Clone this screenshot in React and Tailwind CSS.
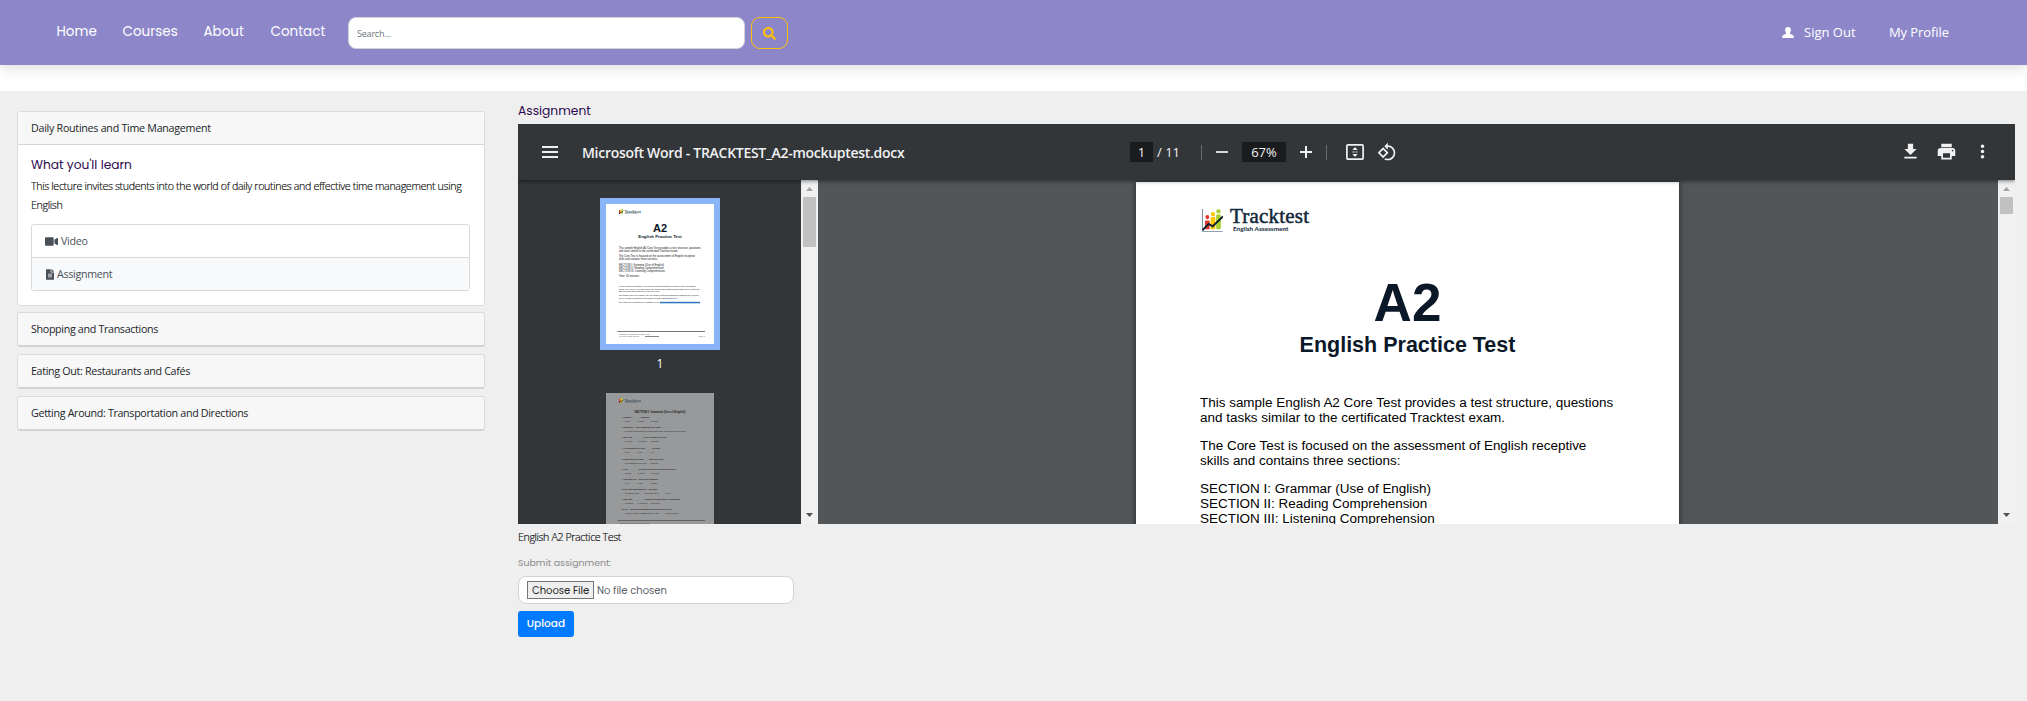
import React from "react";
import { FaSearch, FaVideo, FaFileAlt } from "react-icons/fa";

const poppins = "font-['Poppins','Inter',sans-serif]";
const segoe = "font-['Open_Sans','Noto_Sans',sans-serif]";

function Logo({ className }) {
  return (
    <svg className={className} viewBox="306 297 63 68" preserveAspectRatio="none">
      <path d="M307.5 297V364H368" fill="none" stroke="#6d7f8c" strokeWidth="2.6" />
      <circle cx="322" cy="321" r="6" fill="#e5352c" />
      <rect x="315" y="331" width="14" height="26" rx="3" fill="#e5352c" />
      <circle cx="339" cy="312" r="6.5" fill="#fdc800" />
      <rect x="332" y="321" width="14" height="36" rx="3" fill="#fdc800" />
      <circle cx="355.5" cy="304" r="6.5" fill="#a5d02f" />
      <rect x="348.5" y="313" width="14" height="44" rx="3" fill="#a5d02f" />
      <path d="M308 359L326 341L338 348L369 319" fill="none" stroke="#0b1d2d" strokeWidth="5.5" />
    </svg>
  );
}

function Header() {
  return (
    <header className="relative z-10 flex h-[65px] items-start bg-[#8d87ca] text-white shadow-[0_4px_12px_rgba(0,0,0,0.12)]">
      <nav className={`${poppins} flex gap-[27px] pl-[56.5px] pt-[22px] text-[13.5px] leading-5`}>
        <a className="w-[39px] whitespace-nowrap">Home</a>
        <a className="w-[54px] whitespace-nowrap">Courses</a>
        <a className="w-[40px] whitespace-nowrap">About</a>
        <a className="w-[54px] whitespace-nowrap">Contact</a>
      </nav>
      <div className={`${segoe} ml-[23.5px] mt-[17px] h-8 w-[397px] rounded-lg border border-[#ced4da] bg-white pl-2 pt-[8px] text-[9px] leading-4 tracking-[-0.2px] text-[#6c757d]`}>
        Search...
      </div>
      <button className="ml-[6px] mt-[17px] flex h-8 w-[37px] items-center justify-center rounded-[9px] border border-[#ffc107] text-[#ffc107]">
        <FaSearch className="size-[13px]" />
      </button>
      <div className={`${segoe} ml-auto flex pr-[78px] pt-[22px] text-[13px] leading-5`}>
        <svg className="mr-[10px] mt-[5px] h-[11px] w-3" viewBox="0 0 12 11" fill="currentColor">
          <path d="M6 0C7.9 0 8.9 1.3 8.9 3C8.9 4.8 7.8 6.3 7.5 6.6C8.5 7.2 11 7.7 11.6 9C11.9 9.6 12 10.4 12 11H0C0 10.4.1 9.6.4 9C1 7.7 3.5 7.2 4.5 6.6C4.2 6.3 3.1 4.8 3.1 3C3.1 1.3 4.1 0 6 0Z" />
        </svg>
        <a className="w-[52px] whitespace-nowrap">Sign Out</a>
        <a className="ml-[33px] w-[60px] whitespace-nowrap tracking-[-0.08px]">My Profile</a>
      </div>
    </header>
  );
}

function Lecture({ title }) {
  return (
    <div className="mt-[7px] h-[35px] rounded-[3px] border border-b-2 border-[#dcdcdc] border-b-[#d2d2d2] bg-[#f7f7f7] pl-[13px] pt-[6px] tracking-[-0.32px]">
      {title}
    </div>
  );
}

function Sidebar() {
  return (
    <aside className={`${segoe} ml-[17px] w-[468px] pt-5 text-[10.7px] leading-5 text-[#212529]`}>
      <div className="-mb-px h-[195px] rounded-[3px] border border-[#dcdcdc] bg-white">
        <div className="h-[33px] border-b border-[#d5d5d5] bg-[#f7f7f7] pl-[13px] pt-[6px] tracking-[-0.27px]">
          Daily Routines and Time Management
        </div>
        <div className="px-[13px] pt-[10px]">
          <h2 className={`${poppins} text-[12.25px] leading-5 text-[#2b0a4e]`}>What you'll learn</h2>
          <p className="mt-[2px] font-light leading-[19px] tracking-[-0.355px] text-black whitespace-nowrap [-webkit-text-stroke:0.15px_#000]">
            This lecture invites students into the world of daily routines and effective time management using
            <br />
            English
          </p>
          <div className="mt-[9px] h-[67px] w-[439px] rounded-[3px] border border-[#d9d9d9] tracking-[-0.3px] text-[#495057]">
            <div className="flex h-[33px] items-center border-b border-[#d9d9d9] pl-[13px]">
              <FaVideo className="mr-[3px] h-[13px] w-[13px]" />Video
            </div>
            <div className="flex h-8 items-center bg-[#f8f9fa] pl-[14px]">
              <FaFileAlt className="mr-[3px] h-[11px] w-2" />Assignment
            </div>
          </div>
        </div>
      </div>
      <Lecture title="Shopping and Transactions" />
      <Lecture title="Eating Out: Restaurants and Cafés" />
      <Lecture title="Getting Around: Transportation and Directions" />
    </aside>
  );
}

function Toolbar() {
  return (
    <div className={`${segoe} relative z-10 flex h-14 items-start bg-[#323639] text-[#f1f1f1] shadow-[0_1px_4px_rgba(0,0,0,0.5)]`}>
      <svg className="ml-6 mt-[22px] h-3 w-4" viewBox="0 0 16 12" fill="currentColor"><path d="M0 0H16V2H0ZM0 5H16V7H0ZM0 10H16V12H0Z" /></svg>
      <div className="ml-6 w-[322px] whitespace-nowrap pt-[19px] text-[14px] font-semibold leading-5 tracking-[-0.29px]">Microsoft Word - TRACKTEST_A2-mockuptest.docx</div>
      <div className="ml-[226px] mt-[18px] h-5 w-[23px] bg-[#191b1c] text-center text-[13px] leading-5">1</div>
      <div className="ml-1 mt-[18px] w-[24px] whitespace-nowrap text-[13px] leading-5">/ 11</div>
      <div className="ml-5 mt-[21px] h-[15px] w-px bg-[#6b6e70]" />
      <div className="ml-[14px] mt-[27px] h-[2px] w-3 bg-[#d5d7d8]" />
      <div className="ml-[14px] mt-[18px] h-5 w-11 bg-[#191b1c] text-center text-[13px] leading-5">67%</div>
      <svg className="ml-[14px] mt-[22px] size-3" viewBox="0 0 12 12" fill="currentColor"><path d="M5 0H7V5H12V7H7V12H5V7H0V5H5Z" /></svg>
      <div className="ml-[14px] mt-[21px] h-[15px] w-px bg-[#6b6e70]" />
      <svg className="ml-[19px] mt-5 h-4 w-[18px]" viewBox="0 0 18 16" fill="none">
        <rect x=".9" y=".9" width="16.2" height="14.2" rx="1" stroke="#f1f1f1" strokeWidth="1.7" />
        <path d="M9 3L11.6 6H6.4ZM9 13L6.4 10H11.6ZM6.4 7.6H7.7V8.5H6.4ZM8.4 7.6H9.6V8.5H8.4ZM10.3 7.6H11.6V8.5H10.3Z" fill="#f1f1f1" />
      </svg>
      <svg className="ml-[13px] mt-[18px] size-5" viewBox="0 0 24 24" fill="currentColor">
        <path d="M7.34 6.41L.86 12.9l6.49 6.48 6.49-6.48-6.5-6.49zM3.69 12.9l3.66-3.66L11 12.9l-3.66 3.66-3.65-3.66zm15.67-6.26A8.95 8.95 0 0 0 13 4V.76L8.76 5 13 9.24V6c1.79 0 3.58.68 4.95 2.05a7.007 7.007 0 0 1 0 9.9 6.973 6.973 0 0 1-7.79 1.44l-1.49 1.49C10.02 21.62 11.51 22 13 22c2.3 0 4.61-.88 6.36-2.64a8.98 8.98 0 0 0 0-12.72z" />
      </svg>
      <div className="ml-auto flex pr-[22px] pt-[17px]">
        <svg className="size-[21px]" viewBox="0 0 24 24" fill="currentColor"><path d="M19 9h-4V3H9v6H5l7 7 7-7zM5 18v2h14v-2H5z" /></svg>
        <svg className="ml-[15px] size-[21px]" viewBox="0 0 24 24" fill="currentColor"><path d="M19 8H5c-1.66 0-3 1.34-3 3v6h4v4h12v-4h4v-6c0-1.66-1.34-3-3-3zm-3 11H8v-5h8v5zm3-7c-.55 0-1-.45-1-1s.45-1 1-1 1 .45 1 1-.45 1-1 1zm-1-9H6v4h12V3z" /></svg>
        <svg className="ml-[15px] size-[21px]" viewBox="0 0 24 24" fill="currentColor"><path d="M12 8c1.1 0 2-.9 2-2s-.9-2-2-2-2 .9-2 2 .9 2 2 2zm0 2c-1.1 0-2 .9-2 2s.9 2 2 2 2-.9 2-2-.9-2-2-2zm0 6c-1.1 0-2 .9-2 2s.9 2 2 2 2-.9 2-2-.9-2-2-2z" /></svg>
      </div>
    </div>
  );
}

function Scrollbar({ thumb }) {
  return (
    <div className="flex w-[17px] shrink-0 flex-col items-center bg-[#f1f1f1] pt-[7px] pb-[7px]">
      <svg className="h-1 w-[7px]" viewBox="0 0 7 4"><path d="M0 4L3.5 0L7 4Z" fill="#a3a3a3" /></svg>
      <div className={`mt-[6px] w-[13px] bg-[#c1c1c1] ${thumb}`} />
      <svg className="mt-auto h-1 w-[7px]" viewBox="0 0 7 4"><path d="M0 0L3.5 4L7 0Z" fill="#505050" /></svg>
    </div>
  );
}

/* [text, x, y of the middle, width] in thumbnail pixels */
const firstPageLines = [
  ["This sample English A2 Core Test provides a test structure, questions", 12.7, 44, 82],
  ["and tasks similar to the certificated Tracktest exam.", 12.7, 47.2, 59.6],
  ["The Core Test is focused on the assessment of English receptive", 12.7, 52.2, 76.3],
  ["skills and contains three sections:", 12.7, 55.2, 39],
  ["SECTION I: Grammar (Use of English)", 12.7, 61, 45.3],
  ["SECTION II: Reading Comprehension", 12.7, 64, 45],
  ["SECTION III: Listening Comprehension", 12.7, 67, 46.3],
  ["Time: 45 minutes", 12.7, 72.3, 20.3],
  ["In the official test session, you can do speaking/writing exercises, with a Certificate", 12.7, 82.5, 77.6],
  ["before you receive your test result. The optional Speaking/Writing tests can be completed", 12.7, 84.9, 80.8],
  ["after the successful completion of the Core test.", 12.7, 87.5, 41],
  ["The sample test is for practice only. No official results and TrackTest certificates are provided", 12.7, 91.4, 80],
  ["only for complete tests taken through the website https://tracktest.eu", 12.7, 94.4, 59],
  ["More about the certificates for all English levels:", 12.7, 98.5, 40.5],
];

/* [y of the middle, question, width, answers] in thumbnail pixels */
const questions = [
  [24.3, "1.  Emma is ________ than Mike.", 25, ["a) tall", "b) taller", "c) tallest"]],
  [34.3, "2.  What does ... Father sometimes after noon?", 36, ["a) eat his lunch pasta", "b) is the lunch ready at", "c) does his lunch eaten"]],
  [44.3, "3.  My friend __________ lives in Australia for a year.", 42, ["a) never", "b) has not", "c) did not"]],
  [55.3, "4.  I like walking in the park ______ for dogs.", 35, ["a) an", "b) on", "c) in"]],
  [66.3, "5.  Tomorrow our country ____ ordered to finish.", 39, ["a) companies", "b) to cook", "c) spend"]],
  [76.3, "6.  I like __________ the tables in 90s more around the machines.", 51, ["a) were", "b) when", "c) will not"]],
  [86.3, "7.  John has lived ... world in the mountain.", 33, ["a) an", "b) an", "c) when"]],
  [96.3, "8.  The bus was turned to ... our table.", 33, ["a) sold her shirt", "b) doesn't sell it", "c) are"]],
  [106.3, "9.  She often ___________ crossed color make than the last moment.", 55, ["a) listens", "b) listening", "c) to listen"]],
  [116.3, "10. Mr. ... is the most handsome of film actors of the time.", 47, ["a) more usually reading", "b) usually reads", "c) more usually"]],
];

function ThumbFooter() {
  return (
    <g fill="#555">
      <rect x="11.5" y="127" width="87.5" height=".8" />
      <text x="13" y="131.1" fontSize="2">TrackTest A2 English Practice Test</text>
      <text x="13" y="133.3" fontSize="2">For more tests visit the</text>
      <rect x="39" y="132.2" width="14" height=".7" />
      <text x="92.5" y="133.3" fontSize="2">Page 1</text>
    </g>
  );
}

function ThumbBrand() {
  return (
    <g>
      <rect x="13" y="6" width="1.3" height="4" fill="#e5352c" />
      <rect x="14.4" y="5.5" width="1.2" height="4" fill="#fdc800" />
      <rect x="15.7" y="5" width="1.2" height="4.5" fill="#a5d02f" />
      <path d="M13 9.8L14.5 8L15.3 8.6L17.2 6.8" stroke="#0b1d2d" strokeWidth=".8" fill="none" />
      <text x="18.5" y="8.5" fontSize="4.2" fontFamily="Liberation Serif" fontWeight="700" fill="#3c5262" textLength="16.5">Tracktest</text>
      <text x="19" y="10.2" fontSize="1.5" fill="#3c5262">English Assessment</text>
    </g>
  );
}

function ThumbOne() {
  return (
    <svg className="block h-[140px] w-[108px] bg-white" viewBox="0 0 108 140" fontFamily="Liberation Sans">
      <ThumbBrand />
      <text x="54" y="28.3" fontSize="11" fontWeight="700" textAnchor="middle" fill="#0b1828">A2</text>
      <text x="32.3" y="34.3" fontSize="4.3" fontWeight="700" fill="#0b1828" textLength="43.5">English Practice Test</text>
      {firstPageLines.map(([text, x, y, w]) => (
        <text key={y} x={x} y={y + 0.9} fontSize={y > 80 ? 2.2 : 2.7} fill="#111" textLength={w} lengthAdjust="spacingAndGlyphs">{text}</text>
      ))}
      <rect x="54" y="97.8" width="40" height="1.5" fill="#2f74c0" />
      <ThumbFooter />
    </svg>
  );
}

function ThumbTwo() {
  return (
    <svg className="block h-[140px] w-[108px] bg-[#98999b]" viewBox="0 0 108 140" fontFamily="Liberation Sans" fill="#222">
      <ThumbBrand />
      <text x="28.5" y="20" fontSize="3" fontWeight="700" textLength="51" lengthAdjust="spacingAndGlyphs">SECTION I: Grammar (Use of English)</text>
      {questions.map(([y, q, w, answers]) => (
        <g key={y}>
          <text x="16" y={y + 0.8} fontSize="2.3" fontWeight="700" textLength={w + 3} lengthAdjust="spacingAndGlyphs">{q}</text>
          {answers.map((a, i) => (
            <text key={i} x={19 + i * (answers[0].length > 12 ? 20 : 12.7)} y={y + 4.8} fontSize="2">{a}</text>
          ))}
        </g>
      ))}
      <ThumbFooter />
    </svg>
  );
}

function Thumbnails() {
  return (
    <div className="flex w-[283px] shrink-0 flex-col items-start overflow-hidden bg-[#323639] pl-[82px] pt-[18px]">
      <div className="shrink-0 border-[6px] border-[#8ab4f8]"><ThumbOne /></div>
      <div className={`${segoe} w-[120px] shrink-0 pt-1 text-center text-[12px] leading-5 text-white`}>1</div>
      <div className="ml-[6px] mt-[19px] shrink-0"><ThumbTwo /></div>
    </div>
  );
}

function DocumentPage() {
  return (
    <div className="flex min-w-0 flex-1 justify-center overflow-hidden bg-[#525659] pt-[2px] pr-[1px]">
      <div className="h-[700px] w-[543px] shrink-0 bg-white font-['Liberation_Sans',Arial,sans-serif] text-[#0b1828] shadow-[0_0_6px_rgba(0,0,0,0.6)]">
        <div className="flex pl-[66px] pt-[27px]">
          <Logo className="h-[23px] w-[21px]" />
          <div className="ml-[7px] whitespace-nowrap">
            <div className="-mt-1 h-5 font-['Liberation_Serif',serif] text-[21px] leading-[22px] tracking-[0.2px] text-[#12283a] [-webkit-text-stroke:0.5px_#12283a]">Tracktest</div>
            <div className="ml-[3px] h-[7px] font-['Lato',sans-serif] text-[6.4px] font-bold leading-[8px] text-[#12283a]">English Assessment</div>
          </div>
        </div>
        <div className="mt-[41px] text-center text-[53px] font-bold leading-[60px]">A2</div>
        <div className="text-center text-[21.5px] font-bold leading-6">English Practice Test</div>
        <div className="whitespace-nowrap pl-16 pt-[38px] text-[13.46px] leading-[15px] text-black">
          <p>This sample English A2 Core Test provides a test structure, questions<br />and tasks similar to the certificated Tracktest exam.</p>
          <p className="mt-[13px]">The Core Test is focused on the assessment of English receptive<br />skills and contains three sections:</p>
          <p className="mt-[13px]">SECTION I: Grammar (Use of English)<br />SECTION II: Reading Comprehension<br />SECTION III: Listening Comprehension</p>
        </div>
      </div>
    </div>
  );
}

function Assignment() {
  return (
    <section className="ml-[33px] w-[1497px]">
      <h1 className={`${poppins} h-[33px] pt-[10px] text-[12.25px] leading-5 text-[#2b0a4e]`}>Assignment</h1>
      <div className="flex h-[400px] flex-col overflow-hidden">
        <Toolbar />
        <div className="flex min-h-0 flex-1">
          <Thumbnails />
          <Scrollbar thumb="h-[50px]" />
          <DocumentPage />
          <Scrollbar thumb="h-[17px]" />
        </div>
      </div>
      <p className={`${segoe} pt-[3px] text-[10.7px] font-light leading-5 tracking-[-0.41px] text-black [-webkit-text-stroke:0.15px_#000]`}>English A2 Practice Test</p>
      <div className={poppins}>
        <label className="mt-[6px] block text-[9.4px] leading-5 text-[#8c8c8c]">Submit assignment:</label>
        <div className="mt-[3px] flex h-7 w-[276px] items-center rounded-lg border border-[#ced4da] bg-white pl-2 text-[10px] text-[#5b6168]">
          <span className="flex h-[18px] w-[67px] items-center justify-center whitespace-nowrap border border-[#767676] bg-[#efefef] text-[#222]">Choose File</span>
          <span className="ml-[3px]">No file chosen</span>
        </div>
        <button className="mt-[7px] h-[26px] w-14 rounded-[3px] bg-[#007bff] text-[10.6px] font-medium text-white">Upload</button>
      </div>
    </section>
  );
}

export default function App() {
  return (
    <div className="h-[701px] overflow-hidden bg-[#efefef]">
      <Header />
      <div className="h-[26px] bg-white" />
      <main className="flex"><Sidebar /><Assignment /></main>
    </div>
  );
}
